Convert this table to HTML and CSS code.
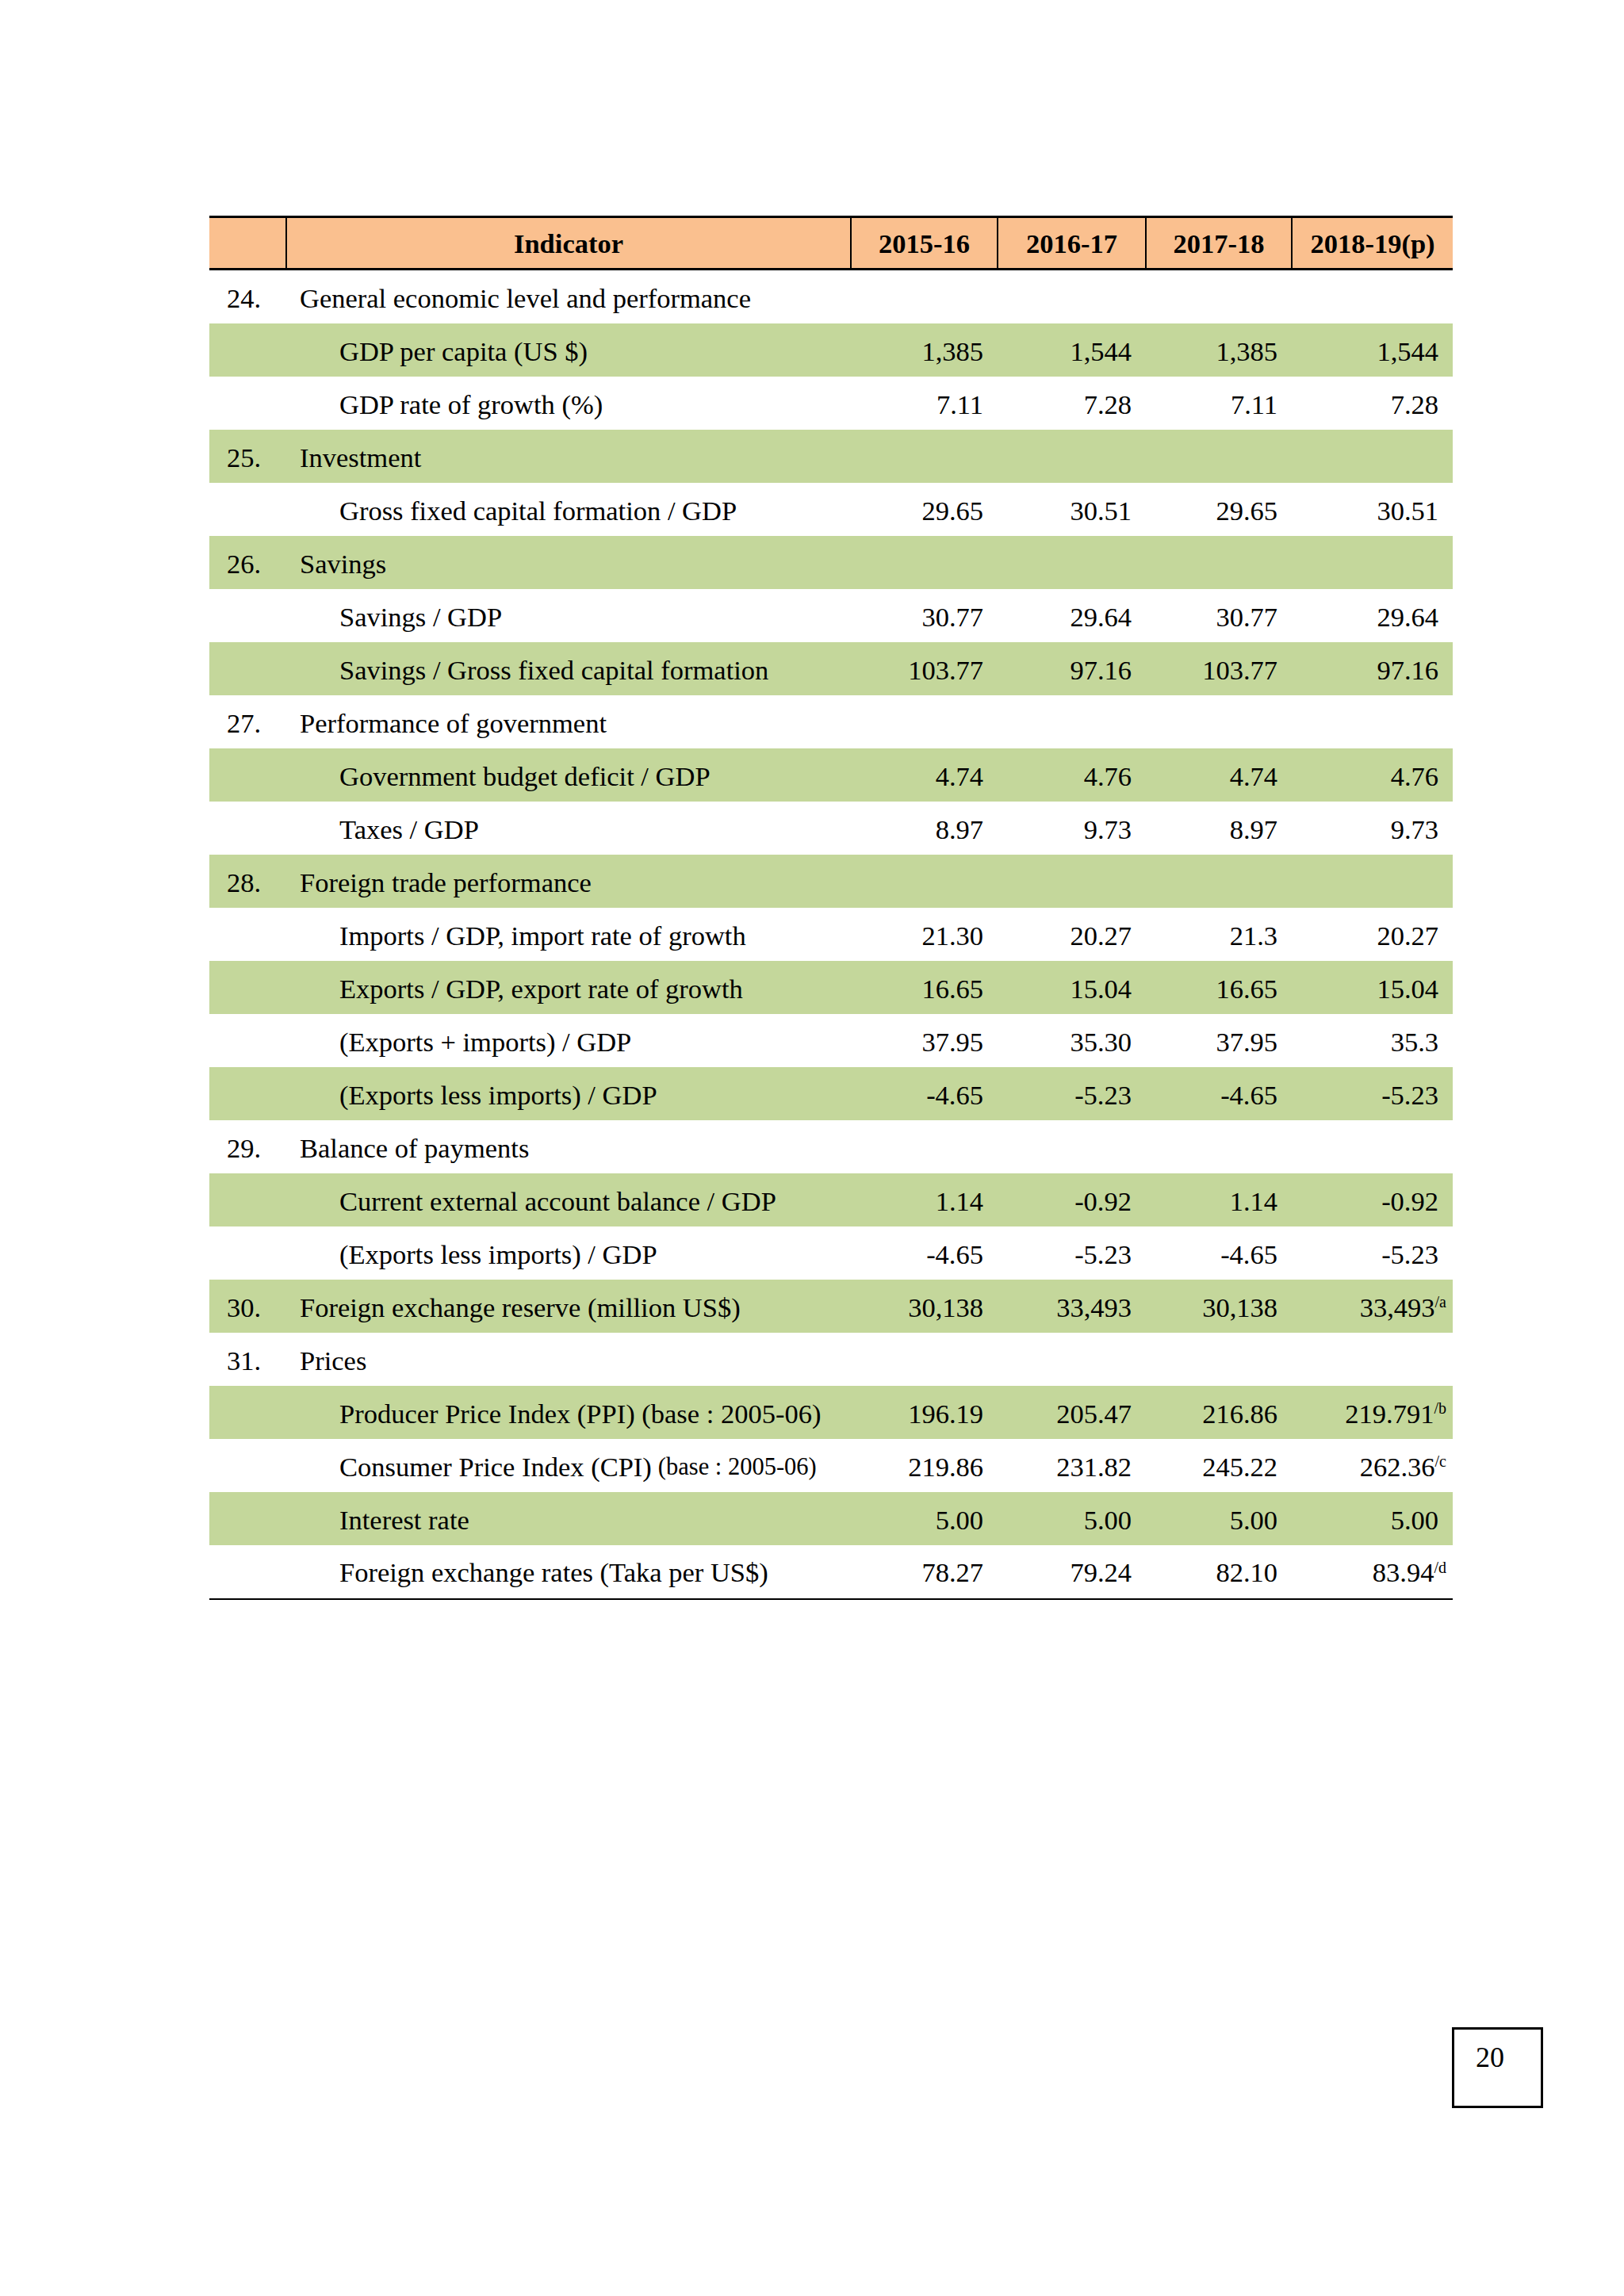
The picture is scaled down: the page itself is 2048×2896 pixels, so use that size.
FILE: index.html
```html
<!DOCTYPE html>
<html lang="en">
<head>
<meta charset="utf-8">
<title>Indicators</title>
<link rel="stylesheet" href="styles.css">
</head>
<body>
<div class="page">
  <div class="table">
    <div class="row head">
      <div class="cell"></div>
      <div class="cell c">Indicator</div>
      <div class="cell c">2015-16</div>
      <div class="cell c">2016-17</div>
      <div class="cell c">2017-18</div>
      <div class="cell c">2018-19(p)</div>
    </div>

    <div class="row"><div class="cell n">24.</div><div class="cell t">General economic level and performance</div><div class="cell v"></div><div class="cell v"></div><div class="cell v"></div><div class="cell v"></div></div>
    <div class="row g"><div class="cell n"></div><div class="cell t s">GDP per capita (US $)</div><div class="cell v">1,385</div><div class="cell v">1,544</div><div class="cell v">1,385</div><div class="cell v">1,544</div></div>
    <div class="row"><div class="cell n"></div><div class="cell t s">GDP rate of growth (%)</div><div class="cell v">7.11</div><div class="cell v">7.28</div><div class="cell v">7.11</div><div class="cell v">7.28</div></div>

    <div class="row g"><div class="cell n">25.</div><div class="cell t">Investment</div><div class="cell v"></div><div class="cell v"></div><div class="cell v"></div><div class="cell v"></div></div>
    <div class="row"><div class="cell n"></div><div class="cell t s">Gross fixed capital formation / GDP</div><div class="cell v">29.65</div><div class="cell v">30.51</div><div class="cell v">29.65</div><div class="cell v">30.51</div></div>

    <div class="row g"><div class="cell n">26.</div><div class="cell t">Savings</div><div class="cell v"></div><div class="cell v"></div><div class="cell v"></div><div class="cell v"></div></div>
    <div class="row"><div class="cell n"></div><div class="cell t s">Savings / GDP</div><div class="cell v">30.77</div><div class="cell v">29.64</div><div class="cell v">30.77</div><div class="cell v">29.64</div></div>
    <div class="row g"><div class="cell n"></div><div class="cell t s">Savings / Gross fixed capital formation</div><div class="cell v">103.77</div><div class="cell v">97.16</div><div class="cell v">103.77</div><div class="cell v">97.16</div></div>

    <div class="row"><div class="cell n">27.</div><div class="cell t">Performance of government</div><div class="cell v"></div><div class="cell v"></div><div class="cell v"></div><div class="cell v"></div></div>
    <div class="row g"><div class="cell n"></div><div class="cell t s">Government budget deficit / GDP</div><div class="cell v">4.74</div><div class="cell v">4.76</div><div class="cell v">4.74</div><div class="cell v">4.76</div></div>
    <div class="row"><div class="cell n"></div><div class="cell t s">Taxes / GDP</div><div class="cell v">8.97</div><div class="cell v">9.73</div><div class="cell v">8.97</div><div class="cell v">9.73</div></div>

    <div class="row g"><div class="cell n">28.</div><div class="cell t">Foreign trade performance</div><div class="cell v"></div><div class="cell v"></div><div class="cell v"></div><div class="cell v"></div></div>
    <div class="row"><div class="cell n"></div><div class="cell t s">Imports / GDP, import rate of growth</div><div class="cell v">21.30</div><div class="cell v">20.27</div><div class="cell v">21.3</div><div class="cell v">20.27</div></div>
    <div class="row g"><div class="cell n"></div><div class="cell t s">Exports / GDP, export rate of growth</div><div class="cell v">16.65</div><div class="cell v">15.04</div><div class="cell v">16.65</div><div class="cell v">15.04</div></div>
    <div class="row"><div class="cell n"></div><div class="cell t s">(Exports + imports) / GDP</div><div class="cell v">37.95</div><div class="cell v">35.30</div><div class="cell v">37.95</div><div class="cell v">35.3</div></div>
    <div class="row g"><div class="cell n"></div><div class="cell t s">(Exports less imports) / GDP</div><div class="cell v">-4.65</div><div class="cell v">-5.23</div><div class="cell v">-4.65</div><div class="cell v">-5.23</div></div>

    <div class="row"><div class="cell n">29.</div><div class="cell t">Balance of payments</div><div class="cell v"></div><div class="cell v"></div><div class="cell v"></div><div class="cell v"></div></div>
    <div class="row g"><div class="cell n"></div><div class="cell t s">Current external account balance / GDP</div><div class="cell v">1.14</div><div class="cell v">-0.92</div><div class="cell v">1.14</div><div class="cell v">-0.92</div></div>
    <div class="row"><div class="cell n"></div><div class="cell t s">(Exports less imports) / GDP</div><div class="cell v">-4.65</div><div class="cell v">-5.23</div><div class="cell v">-4.65</div><div class="cell v">-5.23</div></div>

    <div class="row g"><div class="cell n">30.</div><div class="cell t">Foreign exchange reserve (million US$)</div><div class="cell v">30,138</div><div class="cell v">33,493</div><div class="cell v">30,138</div><div class="cell v">33,493<sup class="fn">/a</sup></div></div>

    <div class="row"><div class="cell n">31.</div><div class="cell t">Prices</div><div class="cell v"></div><div class="cell v"></div><div class="cell v"></div><div class="cell v"></div></div>
    <div class="row g"><div class="cell n"></div><div class="cell t s">Producer Price Index (PPI) (base : 2005-06)</div><div class="cell v">196.19</div><div class="cell v">205.47</div><div class="cell v">216.86</div><div class="cell v">219.791<sup class="fn">/b</sup></div></div>
    <div class="row"><div class="cell n"></div><div class="cell t s">Consumer Price Index (CPI) <span class="small">(base : 2005-06)</span></div><div class="cell v">219.86</div><div class="cell v">231.82</div><div class="cell v">245.22</div><div class="cell v">262.36<sup class="fn">/c</sup></div></div>
    <div class="row g"><div class="cell n"></div><div class="cell t s">Interest rate</div><div class="cell v">5.00</div><div class="cell v">5.00</div><div class="cell v">5.00</div><div class="cell v">5.00</div></div>
    <div class="row last"><div class="cell n"></div><div class="cell t s">Foreign exchange rates (Taka per US$)</div><div class="cell v">78.27</div><div class="cell v">79.24</div><div class="cell v">82.10</div><div class="cell v">83.94<sup class="fn">/d</sup></div></div>
  </div>

  <div class="footer">
    <div class="pagenum">20</div>
  </div>
</div>
</body>
</html>
```

FILE: styles.css
```css
* { box-sizing: border-box; }

html, body {
  margin: 0;
  padding: 0;
  background: #ffffff;
}

body {
  font-family: "Liberation Serif", "Times New Roman", serif;
  color: #000000;
  width: 2048px;
  min-height: 2896px;
}

.page {
  padding: 272px 0 0 264px;
  width: 2048px;
  height: 2896px;
}

.table {
  width: 1568px;
}

.row {
  display: grid;
  grid-template-columns: 96px 712px 185px 187px 184px 204px;
  height: 67px;
  font-size: 34.5px;
}

.row.g {
  background: #c4d79b;
}

.row.head {
  height: 69px;
  background: #fac08f;
  border-top: 3px solid #000000;
  border-bottom: 3px solid #000000;
  font-weight: bold;
  font-size: 34.5px;
}

.row.head .cell + .cell {
  border-left: 2px solid #000000;
}

.row.last {
  height: 69px;
  padding-bottom: 2px;
  border-bottom: 2px solid #000000;
}

.cell {
  display: flex;
  align-items: center;
  white-space: nowrap;
  padding-top: 4px;
}

.cell.c {
  justify-content: center;
  padding-top: 2px;
}

.cell.n {
  padding-left: 22px;
}

.cell.t {
  padding-left: 18px;
}

.cell.t.s {
  padding-left: 68px;
}

.cell.v {
  justify-content: flex-end;
  padding-right: 17px;
}

.cell.v:last-child {
  padding-right: 18px;
}

.small {
  font-size: 30.5px;
  margin-left: 8px;
}

.fn {
  font-size: 20px;
  align-self: flex-start;
  margin-top: 14px;
  margin-right: -10px;
  line-height: 1;
}

.footer {
  display: flex;
  justify-content: flex-end;
  width: 1682px;
  margin-top: 539px;
}

.pagenum {
  width: 115px;
  height: 102px;
  border: 3px solid #000000;
  font-size: 36px;
  padding: 14px 0 0 27px;
  line-height: 1.2;
}
```
